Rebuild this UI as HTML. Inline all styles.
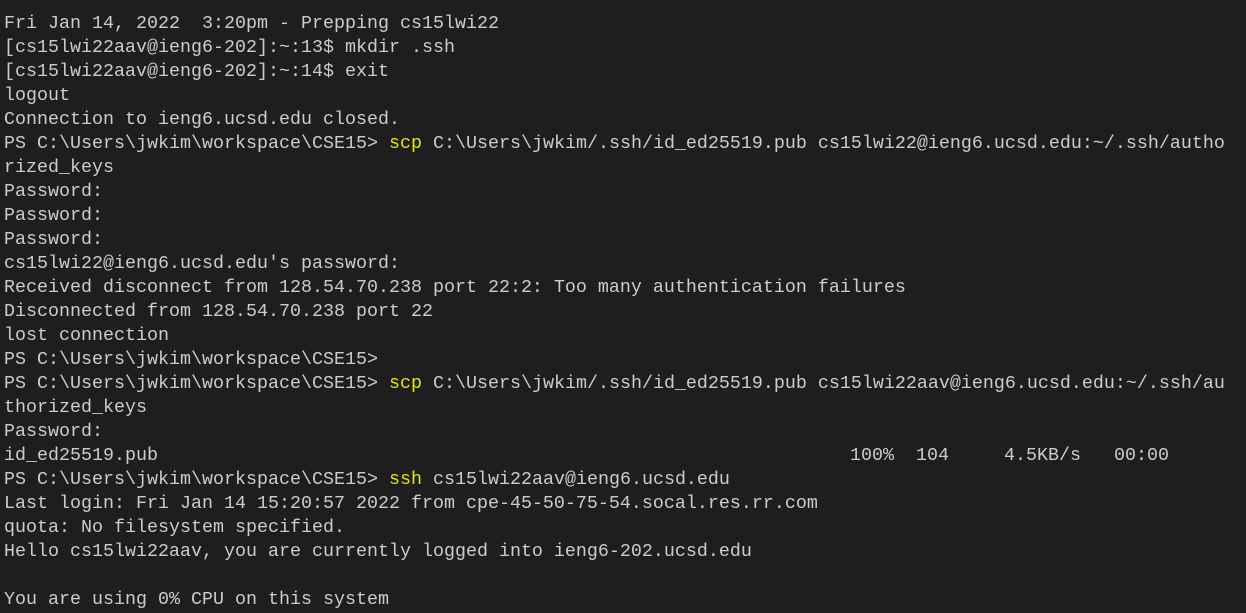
<!DOCTYPE html>
<html><head><style>
html,body{margin:0;padding:0;background:#1e1e1e;width:1246px;height:613px;overflow:hidden}
pre{margin:0;position:absolute;left:4px;top:12px;font-family:"Liberation Mono",monospace;font-size:18.33px;line-height:24px;color:#cccccc;white-space:pre}
.y{color:#e5e510}
.r{position:absolute;left:846px}
</style></head><body><pre>Fri Jan 14, 2022  3:20pm - Prepping cs15lwi22
[cs15lwi22aav@ieng6-202]:~:13$ mkdir .ssh
[cs15lwi22aav@ieng6-202]:~:14$ exit
logout
Connection to ieng6.ucsd.edu closed.
PS C:\Users\jwkim\workspace\CSE15> <span class="y">scp</span> C:\Users\jwkim/.ssh/id_ed25519.pub cs15lwi22@ieng6.ucsd.edu:~/.ssh/autho
rized_keys
Password:
Password:
Password:
cs15lwi22@ieng6.ucsd.edu's password:
Received disconnect from 128.54.70.238 port 22:2: Too many authentication failures
Disconnected from 128.54.70.238 port 22
lost connection
PS C:\Users\jwkim\workspace\CSE15>
PS C:\Users\jwkim\workspace\CSE15> <span class="y">scp</span> C:\Users\jwkim/.ssh/id_ed25519.pub cs15lwi22aav@ieng6.ucsd.edu:~/.ssh/au
thorized_keys
Password:
id_ed25519.pub<span class="r">100%  104     4.5KB/s   00:00</span>
PS C:\Users\jwkim\workspace\CSE15> <span class="y">ssh</span> cs15lwi22aav@ieng6.ucsd.edu
Last login: Fri Jan 14 15:20:57 2022 from cpe-45-50-75-54.socal.res.rr.com
quota: No filesystem specified.
Hello cs15lwi22aav, you are currently logged into ieng6-202.ucsd.edu

You are using 0% CPU on this system</pre></body></html>
